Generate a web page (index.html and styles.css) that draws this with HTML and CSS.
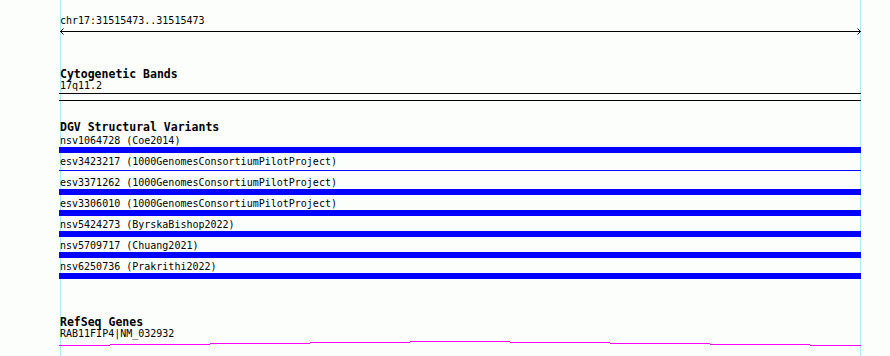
FILE: index.html
```html
<!doctype html>
<html lang="en">
<head>
  <meta charset="utf-8">
  <title>Genome view</title>
  <link rel="stylesheet" href="styles.css">
</head>
<body>
  <div class="view">
    <div class="track ruler">
      <div class="label">chr17:31515473..31515473</div>
      <svg class="arrow" width="802" height="7" viewBox="0 0 802 7">
        <line x1="1" y1="3.5" x2="802" y2="3.5" stroke="#000" stroke-width="1"/>
        <polyline points="4.5,0.5 1.5,3.5 4.5,6.5" fill="none" stroke="#000" stroke-width="1"/>
        <polyline points="798.5,0.5 801.5,3.5 798.5,6.5" fill="none" stroke="#000" stroke-width="1"/>
      </svg>
    </div>

    <div class="track cyto">
      <div class="track-title">Cytogenetic Bands</div>
      <div class="label">17q11.2</div>
      <div class="band"></div>
    </div>

    <div class="track dgv">
      <div class="track-title">DGV Structural Variants</div>
      <div class="feature">
        <div class="label">nsv1064728 (Coe2014)</div>
        <div class="bar"></div>
      </div>
      <div class="feature small">
        <div class="label">esv3423217 (1000GenomesConsortiumPilotProject)</div>
        <div class="bar"></div>
      </div>
      <div class="feature">
        <div class="label">esv3371262 (1000GenomesConsortiumPilotProject)</div>
        <div class="bar"></div>
      </div>
      <div class="feature">
        <div class="label">esv3306010 (1000GenomesConsortiumPilotProject)</div>
        <div class="bar"></div>
      </div>
      <div class="feature">
        <div class="label">nsv5424273 (ByrskaBishop2022)</div>
        <div class="bar"></div>
      </div>
      <div class="feature">
        <div class="label">nsv5709717 (Chuang2021)</div>
        <div class="bar"></div>
      </div>
      <div class="feature">
        <div class="label">nsv6250736 (Prakrithi2022)</div>
        <div class="bar"></div>
      </div>
    </div>

    <div class="track genes">
      <div class="track-title">RefSeq Genes</div>
      <div class="label">RAB11FIP4|NM_032932</div>
      <div class="gene">
        <div class="seg edge s5"></div>
        <div class="seg s4"></div>
        <div class="seg s3"></div>
        <div class="seg s2"></div>
        <div class="seg s1"></div>
        <div class="seg s2"></div>
        <div class="seg s3"></div>
        <div class="seg s4"></div>
        <div class="seg edge s5"></div>
      </div>
    </div>
  </div>
</body>
</html>
```

FILE: styles.css
```css
html, body{
    margin: 0;
    background: #fcfefc;
}
.view{
    box-sizing: border-box;
    width: 802px;
    min-height: 356px;
    margin-left: 59px;
    padding-top: 15px;
    font-family: "DejaVu Sans Mono", "Liberation Mono", monospace;
    color: #000;
    background:
        linear-gradient(#aeecf0, #aeecf0) 1px 0 / 1px 100% no-repeat,
        linear-gradient(#aeecf0, #aeecf0) 801px 0 / 1px 100% no-repeat;
}
.label{
    font-size: 10px;
    line-height: 12px;
    padding-left: 1px;
    white-space: nowrap;
}
.track-title{
    font-size: 11.5px;
    font-weight: bold;
    line-height: 12px;
    padding-left: 1px;
    white-space: nowrap;
}
.arrow{
    display: block;
    margin-top: 1px;
}
.cyto{
    margin-top: 33px;
}
.band{
    height: 6px;
    margin-top: 1px;
    border-top: 1px solid #000;
    border-bottom: 1px solid #000;
}
.dgv{
    margin-top: 20px;
}
.dgv .track-title{
    margin-bottom: 2px;
}
.feature{
    padding-bottom: 3px;
}
.bar{
    height: 6px;
    background: #00f;
}
.feature.small .bar{
    background: linear-gradient(#00f, #00f) 0 2px / 100% 1px no-repeat;
}
.genes{
    margin-top: 34px;
}
.gene{
    display: flex;
    align-items: flex-start;
    height: 6px;
}
.seg{
    width: 100px;
    height: 1px;
    background: #f0f;
}
.seg.edge{
    width: 51px;
}
.s1{ margin-top: 1px; }
.s2{ margin-top: 2px; }
.s3{ margin-top: 3px; }
.s4{ margin-top: 4px; }
.s5{ margin-top: 5px; }
```
